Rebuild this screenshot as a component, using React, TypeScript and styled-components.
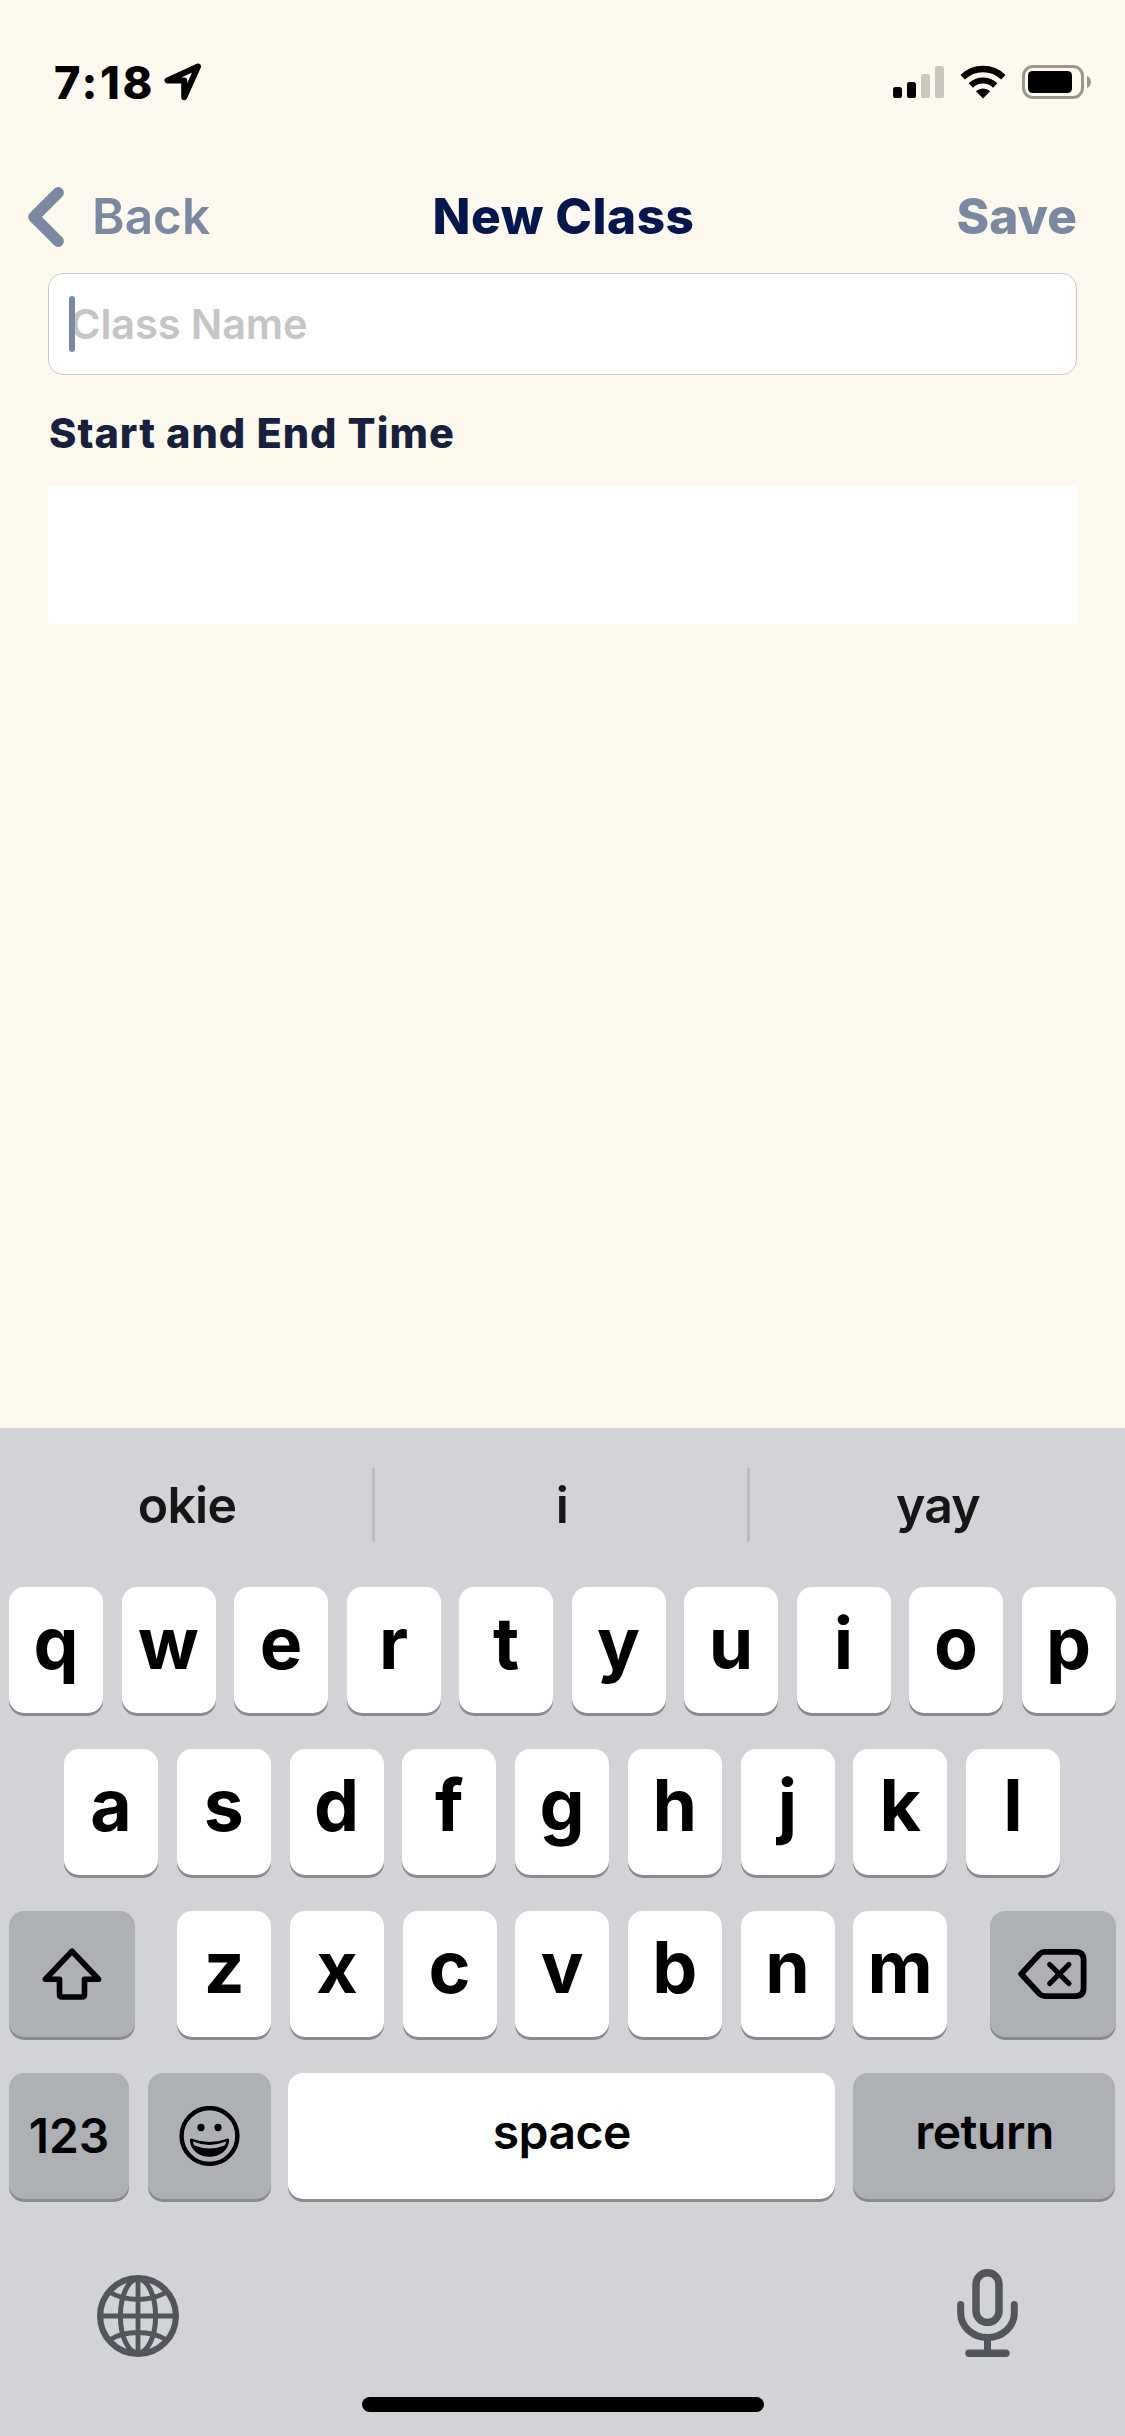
import React from "react";
import styled, { createGlobalStyle } from "styled-components";

const GlobalStyle = createGlobalStyle`
  * { box-sizing: border-box; }
  body { margin: 0; background: #fef9ee; }
`;

const Screen = styled.div`
  width: 1125px;
  height: 2436px;
  display: flex;
  flex-direction: column;
  background: #fef9ee;
  font-family: Inter, "Liberation Sans", sans-serif;
  color: #000;
  overflow: hidden;
  svg { display: block; flex: none; }
`;

const StatusBar = styled.header`
  height: 160px;
  padding: 4px 34px 0 54px;
  display: flex;
  align-items: center;
`;

const Clock = styled.span`
  width: 110px;
  font-size: 45px;
  font-weight: 800;
  line-height: 1;
  letter-spacing: 2.6px;
`;

const StatusIcons = styled.div`
  margin-left: auto;
  display: flex;
  align-items: center;
  gap: 16px;
`;

const NavBar = styled.nav`
  height: 113px;
  padding: 1px 48px 0 28px;
  display: grid;
  grid-template-columns: 1fr auto 1fr;
  align-items: center;
  font-size: 49.5px;
  line-height: 1;
`;

const BackButton = styled.div`
  display: flex;
  align-items: center;
  gap: 24px;
  color: #7a89a1;
  font-weight: 560;
  letter-spacing: 0;
`;

const Title = styled.h1`
  margin: 0 0 0 -20px;
  transform: translateX(21px);
  font-size: inherit;
  font-weight: 800;
  letter-spacing: 0.5px;
  color: #03174c;
`;

const SaveButton = styled.div`
  justify-self: end;
  color: #7a89a1;
  font-weight: 800;
  letter-spacing: 0.1px;
`;

const Form = styled.main`
  flex: 1;
  padding: 0 48px;
`;

const Field = styled.div`
  height: 102px;
  padding: 2px 0 0 20px;
  display: flex;
  align-items: center;
  background: #fff;
  border: 1px solid #c9c9c9;
  border-radius: 15px;
`;

const Caret = styled.span`
  width: 6px;
  height: 56px;
  margin: 0 -5px 2px 0;
  z-index: 1;
  border-radius: 3px;
  background: #7a89a1;
`;

const Placeholder = styled.span`
  font-size: 41.5px;
  font-weight: 570;
  line-height: 1;
  letter-spacing: -0.1px;
  color: #c5c5c7;
`;

const Label = styled.h2`
  margin: 0;
  height: 111px;
  padding: 6px 0 0 1px;
  display: flex;
  align-items: center;
  font-size: 41.5px;
  font-weight: 800;
  line-height: 1;
  letter-spacing: 1px;
  color: #17203c;
`;

const TimeBox = styled.div`
  height: 138px;
  background: #fff;
`;

const Keyboard = styled.section`
  height: 1008px;
  display: flex;
  flex-direction: column;
  background: #d2d3d7;
`;

const Suggestions = styled.div`
  height: 159px;
  padding: 0 1px 6px 0;
  display: flex;
  align-items: center;
`;

const Suggestion = styled.span<{ $w: number }>`
  width: ${(p) => p.$w}px;
  padding-left: 2px;
  text-align: center;
  font-size: 50px;
  font-weight: 600;
  line-height: 1;
  letter-spacing: -0.8px;
  color: #151716;
`;

const Divider = styled.i`
  width: 3px;
  height: 75px;
  border-radius: 1.5px;
  background: #bcbdc1;
`;

const Rows = styled.div`
  display: flex;
  flex-direction: column;
  gap: 36px;
`;

const Row = styled.div<{ $left?: number; $right?: number }>`
  height: 126px;
  padding: 0 ${(p) => p.$right ?? 9.5}px 0 ${(p) => p.$left ?? 9}px;
  display: flex;
  justify-content: space-between;
`;

const LetterGroup = styled.div`
  width: 770px;
  display: flex;
  justify-content: space-between;
`;

const Key = styled.div<{ $w?: number; $dark?: boolean; $lift?: number; $size?: number; $weight?: number }>`
  width: ${(p) => p.$w ?? 94}px;
  height: 126px;
  padding-bottom: ${(p) => p.$lift ?? 0}px;
  display: flex;
  align-items: center;
  justify-content: center;
  border-radius: 15px;
  background: ${(p) => (p.$dark ? "#adb0b5" : "#fff")};
  box-shadow: 0 3px 0 #898a8d;
  font-size: ${(p) => p.$size ?? 71.5}px;
  font-weight: ${(p) => p.$weight ?? 700};
  line-height: 1;
`;

const EmojiKey = styled(Key)`
  margin: 0 -1px 0 1px;
`;

const WordKey = styled(Key)`
  letter-spacing: -0.5px;
`;

const BottomBar = styled.div`
  height: 198px;
  padding: 70px 107px 0 97px;
  display: flex;
  align-items: flex-start;
  justify-content: space-between;
`;

const GlobeSlot = styled.div`
  padding-top: 6px;
`;

const HomeIndicator = styled.div`
  width: 402px;
  height: 15px;
  margin: 0 auto;
  border-radius: 7.5px;
  background: #000;
`;

const LocationIcon = () => (
  <svg width="38" height="38" viewBox="0 0 38 38" fill="none" stroke="#000" strokeWidth="6" strokeLinejoin="round">
    <path d="M34 3.5 L3.5 17.4 H20.2 V34.2 Z" />
  </svg>
);

const SignalIcon = () => (
  <svg width="51" height="32" viewBox="0 0 51 32">
    <rect x="0" y="21" width="9" height="11" rx="2.6" />
    <rect x="14" y="16" width="9" height="16" rx="2.6" />
    <rect x="28" y="8" width="9" height="24" rx="2.6" fill="#cbc7be" />
    <rect x="42" y="0" width="9" height="32" rx="2.6" fill="#cbc7be" />
  </svg>
);

const WifiIcon = () => (
  <svg width="46" height="34" viewBox="0 0 46 34" fill="none" stroke="#000">
    <path d="M2.7 12.2 A29.3 29.3 0 0 1 43.3 12.2" strokeWidth="6.4" />
    <path d="M10.8 20.4 A17.6 17.6 0 0 1 35.2 20.4" strokeWidth="6.2" />
    <path d="M23 33.4 L15.9 26.3 A10.4 10.4 0 0 1 30.1 26.3 Z" fill="#000" stroke="none" />
  </svg>
);

const BatteryIcon = () => (
  <svg width="69" height="34" viewBox="0 0 69 34">
    <rect x="1.5" y="1.5" width="59" height="31" rx="9.5" fill="none" stroke="#9a978f" strokeWidth="3" />
    <rect x="6" y="6" width="44" height="22" rx="4.5" />
    <path d="M65 11 C70.3 13.4 70.3 20.6 65 23 Z" fill="#9a978f" />
  </svg>
);

const ChevronIcon = () => (
  <svg width="40" height="60" viewBox="0 0 40 60" fill="none" stroke="#7a89a1" strokeWidth="11.4" strokeLinecap="round" strokeLinejoin="round">
    <path d="M30.2 5.8 L5.9 30 L30.2 54.2" />
  </svg>
);

const ShiftIcon = () => (
  <svg width="60" height="52" viewBox="0 0 60 52" fill="none" stroke="#000" strokeWidth="5.6" strokeLinejoin="round">
    <path d="M30 3.2 L3.4 31.2 H17.5 V46.4 Q17.5 49 20.3 49 H39.7 Q42.5 49 42.5 46.4 V31.2 H56.6 Z" />
  </svg>
);

const DeleteIcon = () => (
  <svg width="69" height="50" viewBox="0 0 69 50" fill="none" stroke="#000" strokeWidth="5.8" strokeLinecap="round" strokeLinejoin="round">
    <path d="M3.2 25 L21.6 5 Q23.8 2.9 27 2.9 H57.5 Q65.6 2.9 65.6 11 V39 Q65.6 47.1 57.5 47.1 H27 Q23.8 47.1 21.6 45 Z" />
    <path d="M31.6 15.4 L51 34.6 M51 15.4 L31.6 34.6" strokeWidth="5" />
  </svg>
);

const SmileIcon = () => (
  <svg width="62" height="60" viewBox="0 0 62 60" fill="none" stroke="#000">
    <circle cx="30.5" cy="30" r="27.9" strokeWidth="4.4" />
    <ellipse cx="22" cy="21.5" rx="3.6" ry="3.7" fill="#000" stroke="none" />
    <ellipse cx="39" cy="21.5" rx="3.6" ry="3.7" fill="#000" stroke="none" />
    <path
      transform="translate(-0.5 0)"
      d="M13.6 32.7 Q31 39.4 48.4 32.7 Q50.8 32 50.6 34.8 C49.6 44.6 41.4 50.8 31 50.8 C20.6 50.8 12.4 44.6 11.4 34.8 Q11.2 32 13.6 32.7 Z M14.2 35.6 Q14.8 38 16 39.6 Q31 45.6 46 39.6 Q47.2 38 47.8 35.6 Q31 42.2 14.2 35.6 Z"
      fill="#000"
      fillRule="evenodd"
      stroke="none"
    />
  </svg>
);

const GlobeIcon = () => (
  <svg width="82" height="82" viewBox="0 0 82 82" fill="none" stroke="#53555c" strokeWidth="5">
    <circle cx="41" cy="41" r="37.9" strokeWidth="6.2" />
    <ellipse cx="41" cy="41" rx="17.6" ry="37" />
    <path d="M41 3 V79 M3 41 H79" strokeWidth="4.8" />
    <path d="M12.6 17 Q24 24.4 41 24.4 T69.4 17 M12.6 65 Q24 57.6 41 57.6 T69.4 65" />
  </svg>
);

const MicIcon = () => (
  <svg width="61" height="88" viewBox="0 0 61 88" fill="none" stroke="#53555c" strokeWidth="7.4" strokeLinecap="round">
    <rect x="19" y="3.8" width="23" height="49.6" rx="11.5" />
    <path d="M3.7 35.6 V44 A26.8 24.6 0 0 0 57.3 44 V35.6" strokeWidth="7" />
    <path d="M30.5 69 V83" strokeLinecap="butt" strokeWidth="7" />
    <path d="M12 84.2 H49" />
  </svg>
);

const letters = (text: string) => [...text].map((c) => <Key key={c} $lift={12}>{c}</Key>);

export default function App() {
  return (
    <Screen>
      <GlobalStyle />
      <StatusBar>
        <Clock>7:18</Clock>
        <LocationIcon />
        <StatusIcons>
          <SignalIcon />
          <WifiIcon />
          <BatteryIcon />
        </StatusIcons>
      </StatusBar>
      <NavBar>
        <BackButton>
          <ChevronIcon />
          Back
        </BackButton>
        <Title>New Class</Title>
        <SaveButton>Save</SaveButton>
      </NavBar>
      <Form>
        <Field>
          <Caret />
          <Placeholder>Class Name</Placeholder>
        </Field>
        <Label>Start and End Time</Label>
        <TimeBox />
      </Form>
      <Keyboard>
        <Suggestions>
          <Suggestion $w={372}>okie</Suggestion>
          <Divider />
          <Suggestion $w={372}>i</Suggestion>
          <Divider />
          <Suggestion $w={374}>yay</Suggestion>
        </Suggestions>
        <Rows>
          <Row>{letters("qwertyuiop")}</Row>
          <Row $left={64} $right={65}>{letters("asdfghjkl")}</Row>
          <Row>
            <Key $w={126} $dark><ShiftIcon /></Key>
            <LetterGroup>{letters("zxcvbnm")}</LetterGroup>
            <Key $w={126} $dark><DeleteIcon /></Key>
          </Row>
          <Row>
            <Key $w={120} $dark $size={48} $weight={570}>123</Key>
            <EmojiKey $w={123} $dark><SmileIcon /></EmojiKey>
            <WordKey $w={547} $lift={8} $size={48} $weight={600}>space</WordKey>
            <WordKey $w={262} $dark $lift={8} $size={48} $weight={600}>return</WordKey>
          </Row>
        </Rows>
        <BottomBar>
          <GlobeSlot><GlobeIcon /></GlobeSlot>
          <MicIcon />
        </BottomBar>
        <HomeIndicator />
      </Keyboard>
    </Screen>
  );
}
